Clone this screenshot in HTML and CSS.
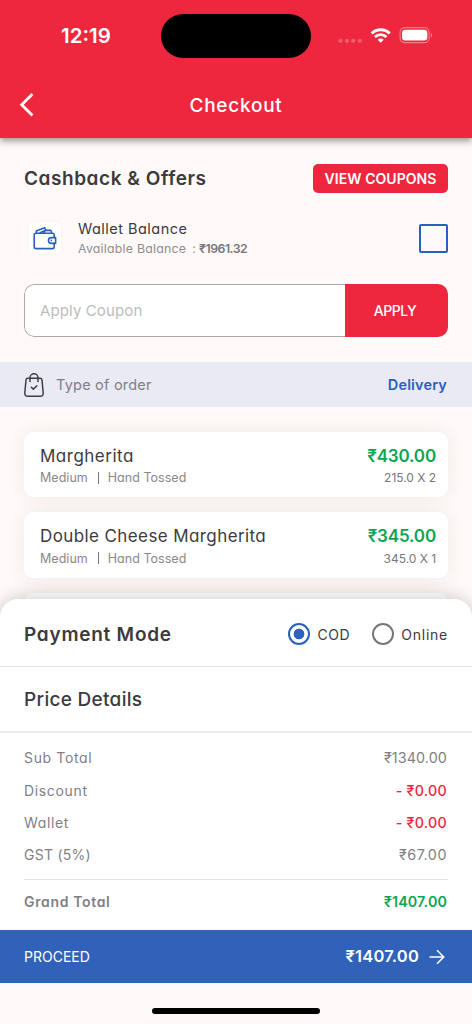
FILE: index.html
```html
<!DOCTYPE html>
<html lang="en">
<head>
<meta charset="utf-8">
<title>Checkout</title>
<link rel="stylesheet" href="styles.css">
</head>
<body>
<div class="app">
  <header class="header">
    <div class="status">
      <span class="time">12:19</span>
      <span class="island"></span>
      <svg class="status-icons" width="96" height="20" viewBox="0 0 96 20">
        <g fill="#fff" fill-opacity=".25"><circle cx="4.5" cy="14.8" r="2.1"/><circle cx="11" cy="14.8" r="2.1"/><circle cx="17.3" cy="14.8" r="2.1"/><circle cx="23.8" cy="14.8" r="2.1"/></g>
        <g fill="none" stroke="#fff" stroke-width="2.9"><path d="M35.7 7.5a12.8 12.8 0 0 1 18 0"/><path d="M38.9 11a8.2 8.2 0 0 1 11.6 0"/></g>
        <path d="M44.7 16.8l-3-3a4.2 4.2 0 0 1 6 0z" fill="#fff"/>
        <rect x="64.1" y="1.6" width="29" height="15" rx="4.6" fill="none" stroke="#fff" stroke-opacity=".4" stroke-width="1.1"/>
        <rect x="66" y="3.8" width="25.3" height="10.8" rx="3" fill="#fff"/>
        <path d="M94.8 7v4.6c1.7-.8 1.7-3.8 0-4.6z" fill="#fff" fill-opacity=".5"/>
      </svg>
    </div>
    <div class="nav">
      <svg class="back" width="16" height="26" viewBox="0 0 16 26"><path d="M13.5 2L2.7 12.7L13.5 23.4" fill="none" stroke="#fff" stroke-width="2.8"/></svg>
      <span class="nav-title">Checkout</span>
    </div>
  </header>

  <main class="content">
    <section class="offers">
      <div class="offers-head">
        <h2 class="heading">Cashback &amp; Offers</h2>
        <button class="view-coupons">VIEW COUPONS</button>
      </div>
      <div class="wallet">
        <span class="wallet-icon">
          <svg width="24" height="24" viewBox="0 0 24 24" fill="none" stroke="#2a60bd" stroke-width="1.6" stroke-linejoin="round" stroke-linecap="round">
            <path d="M21.2 11.4V9A1.800 1.800 0 0 0 19.400 7.200H3A1.800 1.800 0 0 0 1.200 9V20.800A1.800 1.800 0 0 0 3 22.600H19.400A1.800 1.800 0 0 0 21.200 20.800V17.400"/>
            <path d="M22.600 11.600H18.400A2.900 2.900 0 0 0 18.400 17.400H22.600Z"/><path d="M18.300 14.400V14.600"/>
            <path d="M3.300 7V4.900L11.600 1.700L13 4.200M7.200 6.800L12.600 4.200M11 7L12.200 4.400H17.800L18.800 7"/>
          </svg>
        </span>
        <div class="wallet-text">
          <span class="wallet-title">Wallet Balance</span>
          <span class="wallet-sub"><span class="wallet-label">Available Balance</span><span class="colon">:</span><b class="wallet-amount">₹1961.32</b></span>
        </div>
        <span class="checkbox"></span>
      </div>
      <div class="coupon">
        <span class="coupon-input">Apply Coupon</span>
        <button class="apply">APPLY</button>
      </div>
    </section>

    <div class="order-type">
      <svg width="20" height="24" viewBox="0 0 20 24" fill="none" stroke="#3f3f42" stroke-width="1.5" stroke-linecap="round" stroke-linejoin="round">
        <path d="M3.8 5.3H16.2C17.3 5.3 17.9 5.9 18 7L19.2 20C19.3 22.2 18.2 23.2 16.2 23.2H3.8C1.8 23.2.7 22.2.8 20L2 7C2.1 5.9 2.7 5.3 3.8 5.3Z"/>
        <path d="M6 8.5V4.8A4 4 0 0 1 14 4.8V8.5"/><path d="M7.3 14.2L9.3 16.1L12.9 12.7"/>
      </svg>
      <span class="type-label">Type of order</span>
      <span class="type-value">Delivery</span>
    </div>

    <section class="items">
      <article class="card">
        <div class="row"><span class="name name-one">Margherita</span><span class="price">₹430.00</span></div>
        <div class="row meta"><span class="options"><span>Medium</span><i class="bar"></i><span>Hand Tossed</span></span><span class="qty">215.0 X 2</span></div>
      </article>
      <article class="card">
        <div class="row"><span class="name">Double Cheese Margherita</span><span class="price">₹345.00</span></div>
        <div class="row meta"><span class="options"><span>Medium</span><i class="bar"></i><span>Hand Tossed</span></span><span class="qty">345.0 X 1</span></div>
      </article>
      <article class="card"></article>
    </section>
  </main>

  <section class="sheet">
    <div class="payment">
      <h2 class="heading pay-heading">Payment Mode</h2>
      <div class="choices">
        <span class="choice"><i class="radio radio-on"></i><span class="cod">COD</span></span>
        <span class="choice"><i class="radio"></i><span class="online">Online</span></span>
      </div>
    </div>
    <h3 class="price-heading">Price Details</h3>
    <div class="totals">
      <div class="line"><span>Sub Total</span><span class="amount">₹1340.00</span></div>
      <div class="line"><span>Discount</span><span class="amount minus">- ₹0.00</span></div>
      <div class="line"><span>Wallet</span><span class="amount minus">- ₹0.00</span></div>
      <div class="line"><span class="gst">GST (5%)</span><span class="amount gst-amount">₹67.00</span></div>
      <div class="line grand"><span>Grand Total</span><span class="amount grand-amount">₹1407.00</span></div>
    </div>
  </section>
  <div class="proceed">
    <span class="proceed-label">PROCEED</span>
    <span class="proceed-total">₹1407.00</span>
    <svg width="16" height="16" viewBox="0 0 16 16" fill="none" stroke="#fff" stroke-width="1.6"><path d="M.5 8H14.5M8 1.3L14.7 8L8 14.7"/></svg>
  </div>
  <footer class="home"><span class="home-bar"></span></footer>
</div>
</body>
</html>
```
FILE: styles.css
```css
* { box-sizing: border-box; }
body { margin: 0; }
.app {
  width: 472px; height: 1024px; overflow: hidden;
  display: flex; flex-direction: column;
  background: #fffaf9; color: #3b3b3d;
  font-family: Inter, "Open Sans", sans-serif;
  font-feature-settings: "cv11";
  white-space: nowrap;
}
h2, h3 { margin: 0; }
button { border: 0; padding: 0; color: #fff; background: #ef273e; font-family: inherit; font-feature-settings: inherit; }

.header {
  height: 138px; flex: none; z-index: 1; color: #fff; background: #ef273e;
  box-shadow: 0 3px 7px rgba(60, 40, 40, .5);
}
.status { height: 72px; display: grid; grid-template-columns: 161px 150px 1fr; align-items: center; }
.time { padding: 0 0 1px 11px; text-align: center; font-size: 20.5px; font-weight: 600; font-feature-settings: normal; }
.island { height: 44px; border-radius: 22px; background: #000; }
.status-icons { margin: -1px 0 0 25px; }
.nav { height: 66px; display: grid; grid-template-columns: 60px 1fr 60px; align-items: center; }
.back { margin-left: 19px; }
.nav-title { text-align: center; font-size: 19px; letter-spacing: .75px; font-weight: 450; }

.content { height: 481px; flex: none; overflow: hidden; }
.offers { height: 224px; padding: 25px 24px 0; }
.offers-head { height: 30px; display: flex; align-items: center; justify-content: space-between; }
.heading { font-size: 19px; font-weight: 600; letter-spacing: .56px; }
.view-coupons { width: 135px; height: 29px; border-radius: 5px; font-size: 14px; font-weight: 600; letter-spacing: .05px; }
.wallet { height: 58px; margin-top: 16px; padding-left: 5px; display: flex; align-items: center; }
.wallet-icon { width: 32px; height: 32px; border-radius: 5px; display: grid; place-items: center; background: #fff; box-shadow: 0 0 3px rgba(90, 50, 50, .07); }
.wallet-text { margin-left: 17px; flex: 1; display: grid; grid-template-rows: 20px 20px; align-items: center; }
.wallet-title { font-size: 14.5px; letter-spacing: .47px; }
.wallet-sub { display: flex; font-size: 12.3px; color: #8d8c90; letter-spacing: .25px; }
.colon { margin: 0 3px 0 6px; }
.wallet-amount { font-weight: 600; letter-spacing: -.5px; color: #77777b; }
.checkbox { width: 29px; height: 29px; border: 2px solid #2a60bd; border-radius: 2px; }
.coupon { height: 53px; margin-top: 17px; display: flex; border-radius: 10px; overflow: hidden; }
.coupon-input {
  flex: 1; display: flex; align-items: center; padding: 0 0 1px 15px; background: #fff;
  border: 1px solid #aaa; border-right: 0; border-radius: 10px 0 0 10px;
  font-size: 15px; letter-spacing: .12px; color: #bdbcbd;
}
.apply { width: 103px; padding: 0 3px 1px 0; font-size: 14px; font-weight: 500; letter-spacing: -.5px; }

.order-type { height: 45px; padding: 0 25px 0 24px; display: flex; align-items: center; background: #e9eaf3; }
.type-label { margin-left: 12px; flex: 1; font-size: 14.5px; letter-spacing: .22px; color: #7f7f84; }
.type-value { font-size: 14.5px; font-weight: 600; letter-spacing: .15px; color: #2a60bd; }

.items { padding: 24.5px 24px 0; display: grid; gap: 15px; }
.card { height: 65.5px; padding: 13px 12px 0 16px; border-radius: 9px; background: #fff; box-shadow: 0 0 18px rgba(100, 70, 70, .1); }
.row { height: 22px; display: flex; align-items: center; justify-content: space-between; }
.name { font-size: 17px; letter-spacing: .4px; }
.name-one { letter-spacing: .5px; }
.price { font-size: 17px; font-weight: 600; letter-spacing: -.15px; color: #0aa651; }
.meta { font-size: 12.5px; color: #88888c; }
.options { display: flex; align-items: center; letter-spacing: .03px; }
.bar { width: 1px; height: 12px; margin: 0 9px 0 10px; background: #77777b; }
.qty { color: #77777b; font-size: 12px; letter-spacing: -.03px; }

.sheet { height: 331px; flex: none; z-index: 1; margin-top: -20px; background: #fff; border-radius: 18px 18px 0 0; box-shadow: 0 0 17px rgba(60, 50, 50, .28); }
.payment { height: 68px; padding: 3px 24px 0 24px; display: flex; align-items: center; justify-content: space-between; border-bottom: 1px solid #e2e2e3; }
.pay-heading { letter-spacing: .75px; }
.choices { display: flex; gap: 22px; font-size: 14px; }
.choice { display: flex; align-items: center; gap: 7px; }
.cod { letter-spacing: .6px; }
.online { letter-spacing: .75px; }
.radio { width: 22px; height: 22px; border: 2px solid #77777a; border-radius: 50%; }
.radio-on { border-color: #2a60bd; background: radial-gradient(circle, #2f63bb 5px, transparent 5.7px); }
.price-heading { height: 66px; padding: 1px 0 0 24px; display: flex; align-items: center; font-size: 19px; font-weight: 500; letter-spacing: .3px; border-bottom: 2px solid #ededee; }
.totals { margin: 8.5px 24px 0; color: #7f7f84; }
.line { height: 32.4px; padding-right: 1px; display: flex; align-items: center; justify-content: space-between; font-size: 14px; letter-spacing: .65px; }
.gst { letter-spacing: .25px; }
.amount { font-size: 14.3px; letter-spacing: .12px; }
.gst-amount { letter-spacing: .55px; }
.minus { color: #ef273e; font-weight: 500; letter-spacing: .25px; }
.grand { height: 44.5px; margin-top: 8px; border-top: 1px solid #e2e2e3; font-weight: 600; letter-spacing: .65px; }
.grand-amount { letter-spacing: .12px; color: #0aa651; }

.proceed { height: 53px; flex: none; z-index: 2; padding: 0 27px 0 24px; display: flex; align-items: center; color: #fff; background: #3062b9; }
.proceed-label { flex: 1; padding-bottom: 1px; font-size: 14px; }
.proceed-total { margin-right: 10px; padding-bottom: 2px; font-size: 16.5px; font-weight: 600; letter-spacing: .2px; }
.home { flex: 1; display: flex; justify-content: center; padding-top: 25px; z-index: 2; background: #fffaf9; }
.home-bar { width: 168px; height: 6px; border-radius: 3px; background: #000; }
```
